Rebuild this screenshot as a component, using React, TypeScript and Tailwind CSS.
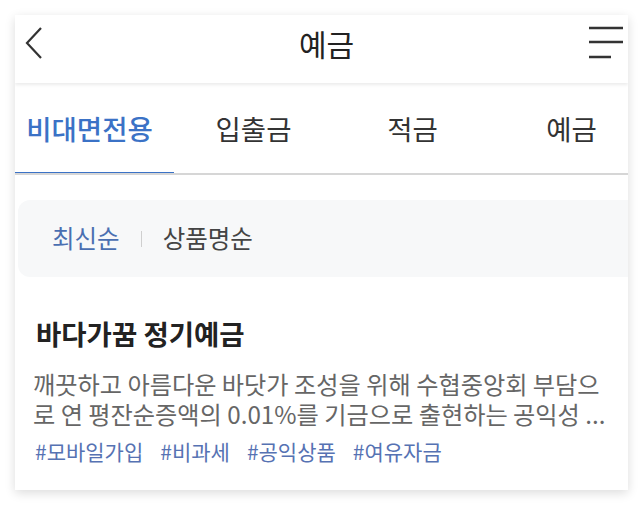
import React from "react";

const tabs = ["비대면전용", "입출금", "적금", "예금"];
const tags = ["#모바일가입", "#비과세", "#공익상품", "#여유자금"];

function BackIcon() {
  return (
    <svg width="22" height="34" viewBox="0 0 22 34" fill="none">
      <path d="M18 2 L4 17 L18 32" stroke="#333" strokeWidth="2.2" />
    </svg>
  );
}

function MenuIcon() {
  return (
    <svg width="36" height="34" viewBox="0 0 36 34" fill="none">
      <path d="M1 2 H35 M1 16 H35 M1 31 H23" stroke="#333" strokeWidth="2.4" />
    </svg>
  );
}

export default function App() {
  return (
    <div className="min-h-[506px] bg-white p-[15px] font-['Noto_Sans_CJK_KR','Noto_Sans',sans-serif]">
      <div className="w-[613px] overflow-hidden bg-white shadow-[0_3px_10px_rgba(0,0,0,0.14)]">
        {/* header */}
        <div className="relative z-10 h-[68px] bg-white shadow-[0_2px_3px_rgba(0,0,0,0.08)]">
          <div className="flex h-[55px] items-center justify-between pl-[8px] pr-[4px]">
            <BackIcon />
            <h1 className="ml-[20px] text-[30px] leading-none text-[#222]">예금</h1>
            <MenuIcon />
          </div>
        </div>

        {/* tabs */}
        <div className="flex h-[92px] overflow-hidden border-b-2 border-[#d6d6d6]">
          {tabs.map((t, i) => (
            <div
              key={t}
              className={`flex w-[159px] shrink-0 items-center justify-center pt-[2px] text-[27.5px] ${
                i === 0 ? "-mb-[2px] border-b-[3px] border-[#3b72c6] pr-[10px] font-medium text-[#3b72c6]" : "text-[#333]"
              }`}
            >
              {t}
            </div>
          ))}
        </div>

        {/* sort bar */}
        <div className="mt-[25px] -mr-[12px] ml-[3px] flex h-[77px] items-center rounded-xl bg-[#f7f8f9] pl-[34px] text-[24.5px]">
          <span className="text-[#4a6fb1]">최신순</span>
          <span className="mx-[21px] h-[16px] w-px bg-[#cfcfcf]" />
          <span className="text-[#444]">상품명순</span>
        </div>

        {/* product */}
        <div className="pl-[18px] pr-[20px] pt-[38px] pb-[25px]">
          <h2 className="pl-[3px] text-[27.5px] font-bold leading-[36px] text-[#222]">바다가꿈 정기예금</h2>
          <p className="mt-[18px] text-[24.2px] leading-[30px] text-[#666]">
            깨끗하고 아름다운 바닷가 조성을 위해 수협중앙회 부담으로 연 평잔순증액의 0.01%를 기금으로 출현하는 공익성 ...
          </p>
          <div className="mt-[8px] flex gap-[17px] pl-[2px] text-[21px] leading-[28px] text-[#5672b3]">
            {tags.map((t) => (
              <span key={t}>{t}</span>
            ))}
          </div>
        </div>
      </div>
    </div>
  );
}
